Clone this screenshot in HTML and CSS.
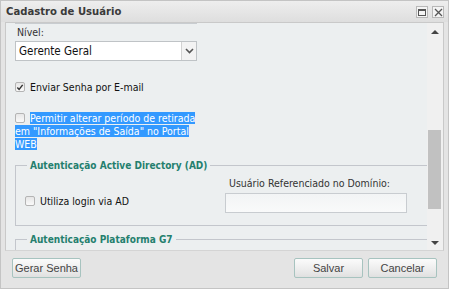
FILE: index.html
```html
<!DOCTYPE html>
<html lang="pt-BR">
<head>
    <meta charset="UTF-8">
    <title>Cadastro de Usuário</title>
    <link rel="stylesheet" href="styles.css">
</head>
<body>
    <div class="dialog">
        <div class="title-bar">
            <span class="title">Cadastro de Usuário</span>
            <div class="title-buttons">
                <span class="tb-btn"><span class="max-icon"></span></span>
                <span class="tb-btn">
                    <svg width="9" height="9" viewBox="0 0 9 9"><path d="M1 1L8 8M8 1L1 8" stroke="#555" stroke-width="1.3"/></svg>
                </span>
            </div>
        </div>

        <div class="panel">
            <div class="scroll-area">
                <div class="content">
                    <div class="text-input top-input"></div>

                    <label class="field-label">Nível:</label>
                    <div class="select">
                        <span class="select-value">Gerente Geral</span>
                        <span class="select-arrow">
                            <svg width="9" height="6" viewBox="0 0 9 6"><path d="M1 1l3.5 3.5L8 1" fill="none" stroke="#555" stroke-width="1.6"/></svg>
                        </span>
                    </div>

                    <div class="check-row">
                        <span class="checkbox checked">
                            <svg width="9" height="9" viewBox="0 0 9 9"><path d="M1.5 4.5l2 2.2L7.5 1.5" fill="none" stroke="#333" stroke-width="1.6"/></svg>
                        </span>
                        <span>Enviar Senha por E-mail</span>
                    </div>

                    <div class="check-wrap">
                        <span class="checkbox"></span><span class="selected">Permitir alterar período de retirada em "Informações de Saída" no Portal WEB</span>
                    </div>

                    <fieldset class="group">
                        <legend>Autenticação Active Directory (AD)</legend>
                        <div class="group-row">
                            <div class="check-row ad-check">
                                <span class="checkbox"></span>
                                <span>Utiliza login via AD</span>
                            </div>
                            <div class="ad-user">
                                <label class="field-label">Usuário Referenciado no Domínio:</label>
                                <div class="text-input ad-input"></div>
                            </div>
                        </div>
                    </fieldset>

                    <fieldset class="group">
                        <legend>Autenticação Plataforma G7</legend>
                        <div class="group-spacer"></div>
                    </fieldset>
                </div>
            </div>
            <div class="scrollbar">
                <span class="arrow-up"></span>
                <div class="track">
                    <div class="thumb"></div>
                </div>
                <span class="arrow-down"></span>
            </div>
        </div>

        <div class="footer">
            <button class="btn">Gerar Senha</button>
            <div class="footer-right">
                <button class="btn">Salvar</button>
                <button class="btn">Cancelar</button>
            </div>
        </div>
    </div>
</body>
</html>
```

FILE: styles.css
```css
body {
    margin: 0;
    background: #fff;
    font-family: "DejaVu Sans Condensed", "DejaVu Sans", sans-serif;
    font-stretch: semi-condensed;
    font-size: 10.5px;
    color: #222;
}
.dialog {
    width: 447px;
    height: 287px;
    border: 1px solid #c4c4c4;
    background: #e4e4e4;
    display: flex;
    flex-direction: column;
}
.title-bar {
    height: 21px;
    display: flex;
    align-items: center;
    justify-content: space-between;
    padding: 0 4px 0 5px;
    background: linear-gradient(#eeeeee, #dedede);
}
.title {
    font-family: "DejaVu Sans", sans-serif;
    font-weight: bold;
    font-size: 11.2px;
    color: #3a3a3a;
}
.title-buttons {
    display: flex;
    gap: 4px;
    padding-top: 1px;
}
.tb-btn {
    width: 10px;
    height: 10px;
    border: 1px solid #b8b8b8;
    background: #f4f4f4;
    display: flex;
    align-items: center;
    justify-content: center;
}
.max-icon {
    width: 6px;
    height: 4px;
    border: 1px solid #555;
    border-top-width: 2px;
}
.panel {
    margin: 0 4px;
    height: 227px;
    border: 1px solid #c9c9c9;
    border-bottom-color: #d4d4d4;
    background: #eceff0;
    display: flex;
}
.scroll-area {
    flex: 1;
    overflow: hidden;
}
.content {
    padding-left: 9px;
    margin-top: -9px;
}
.text-input {
    height: 18px;
    border: 1px solid #c8ccd0;
    background: linear-gradient(#f2f4f5, #f9fafa);
}
.top-input {
    width: 180px;
    height: 8px;
    background: #fff;
}
.field-label {
    display: block;
    color: #333;
    line-height: 13px;
}
.content > .field-label {
    margin: 2px 0 2px 2px;
}
.select {
    width: 180px;
    height: 18px;
    border: 1px solid #bfc3c6;
    background: #fff;
    display: flex;
    align-items: center;
    justify-content: space-between;
}
.select-value {
    padding-left: 3px;
    font-size: 11.5px;
    color: #111;
}
.select-arrow {
    width: 14px;
    height: 18px;
    border-left: 1px solid #d2d2d2;
    background: #f3f3f3;
    display: flex;
    align-items: center;
    justify-content: center;
}
.check-row {
    display: flex;
    align-items: center;
    gap: 5px;
    color: #111;
}
.content > .check-row {
    margin-top: 20px;
}
.checkbox {
    display: inline-flex;
    align-items: center;
    justify-content: center;
    box-sizing: border-box;
    width: 10px;
    height: 10px;
    border: 1px solid #b4b4b4;
    border-radius: 2px;
    background: linear-gradient(#e6e6e6, #fafafa);
}
.check-wrap {
    width: 183px;
    margin-top: 19px;
    line-height: 13px;
    color: #fff;
}
.check-wrap .checkbox {
    margin-right: 5px;
    vertical-align: -1px;
}
.selected {
    background: #3399ff;
}
.group {
    margin: 9px 0 0 0;
    padding: 0 0 0 9px;
    border: 1px solid #c3c6cc;
    border-right: none;
    min-width: 0;
}
.group legend {
    padding: 0 3px;
    margin-left: 2px;
    font-size: 10px;
    font-weight: bold;
    color: #247f6e;
}
.group-row {
    display: flex;
    height: 54px;
}
.ad-check {
    margin-top: 24px;
    align-self: flex-start;
    width: 200px;
}
.ad-user {
    padding-top: 6px;
}
.ad-user .field-label {
    margin: 0 0 3px 4px;
}
.ad-input {
    width: 180px;
}
.group + .group {
    margin-top: 8px;
}
.group-spacer {
    height: 20px;
}
.scrollbar {
    width: 16px;
    background: #f0f0f0;
    display: flex;
    flex-direction: column;
    align-items: center;
}
.arrow-up,
.arrow-down {
    width: 0;
    height: 0;
    border-left: 4px solid transparent;
    border-right: 4px solid transparent;
}
.arrow-up {
    margin-top: 7px;
    border-bottom: 4px solid #444;
}
.arrow-down {
    margin-bottom: 5px;
    border-top: 4px solid #444;
}
.track {
    flex: 1;
    width: 100%;
}
.thumb {
    margin: 96px 2px 0 1px;
    height: 79px;
    background: #c1c1c1;
}
.footer {
    flex: 1;
    display: flex;
    justify-content: space-between;
    align-items: flex-start;
    padding: 7px 11px 0 11px;
}
.footer-right {
    display: flex;
    gap: 5px;
}
.btn {
    width: 69px;
    height: 20px;
    padding: 0;
    border: 1px solid #a7c3bf;
    border-radius: 2px;
    background: linear-gradient(#fbfbfb, #ececec 60%, #e0e0e0);
    font-family: "Liberation Sans", sans-serif;
    font-size: 11px;
    white-space: nowrap;
    color: #444;
}
```
